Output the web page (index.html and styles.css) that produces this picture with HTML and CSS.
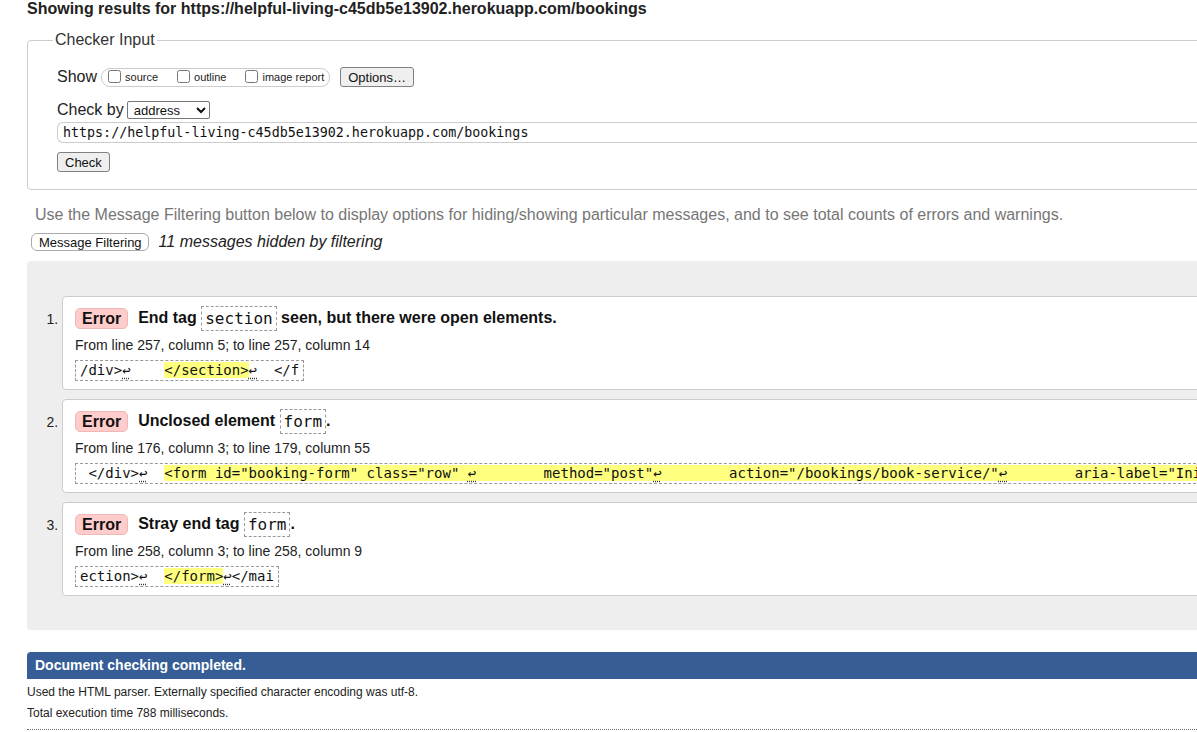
FILE: index.html
```html
<!DOCTYPE html>
<html lang="en">
<head>
<meta charset="utf-8">
<title>Nu Html Checker</title>
<link rel="stylesheet" href="styles.css">
</head>
<body>
<div class="page">
  <h2 class="title">Showing results for https://helpful-living-c45db5e13902.herokuapp.com/bookings</h2>

  <fieldset class="checker">
    <legend class="legend">Checker Input</legend>
    <div class="row-show">
      <span class="lbl">Show</span>
      <span class="opts">
        <label class="opt"><input type="checkbox" class="cb">source</label>
        <label class="opt"><input type="checkbox" class="cb">outline</label>
        <label class="opt last"><input type="checkbox" class="cb">image report</label>
      </span>
      <button class="btn btn-options" type="button">Options…</button>
    </div>
    <div class="row-by">
      <span class="lbl">Check by</span>
      <select class="sel"><option>address</option></select>
    </div>
    <input class="url" type="text" value="https://helpful-living-c45db5e13902.herokuapp.com/bookings">
    <div class="row-check"><button class="btn btn-check" type="button">Check</button></div>
  </fieldset>

  <p class="instructions">Use the Message Filtering button below to display options for hiding/showing particular messages, and to see total counts of errors and warnings.</p>
  <div class="filter-row">
    <button class="btn-filter" type="button">Message Filtering</button>
    <span class="hidden-count">11 messages hidden by filtering</span>
  </div>

  <div class="results">
    <ol class="msgs">
      <li class="msg">
        <p class="msg-head"><span class="badge">Error</span><span class="msg-text">End tag <code class="tag">section</code> seen, but there were open elements.</span></p>
        <p class="loc">From line 257, column 5; to line 257, column 14</p>
        <p class="extract-wrap"><code class="extract">/div&gt;<span class="lf">↩</span>    <mark class="hl">&lt;/section&gt;</mark><span class="lf">↩</span>  &lt;/f</code></p>
      </li>
      <li class="msg">
        <p class="msg-head"><span class="badge">Error</span><span class="msg-text">Unclosed element <code class="tag">form</code>.</span></p>
        <p class="loc">From line 176, column 3; to line 179, column 55</p>
        <p class="extract-wrap"><code class="extract"> &lt;/div&gt;<span class="lf">↩</span>  <mark class="hl">&lt;form id="booking-form" class="row" <span class="lf">↩</span>        method="post"<span class="lf">↩</span>        action="/bookings/book-service/"<span class="lf">↩</span>        aria-label="Ini</mark></code></p>
      </li>
      <li class="msg">
        <p class="msg-head"><span class="badge">Error</span><span class="msg-text">Stray end tag <code class="tag">form</code>.</span></p>
        <p class="loc">From line 258, column 3; to line 258, column 9</p>
        <p class="extract-wrap"><code class="extract">ection&gt;<span class="lf">↩</span>  <mark class="hl">&lt;/form&gt;</mark><span class="lf">↩</span>&lt;/mai</code></p>
      </li>
    </ol>
  </div>

  <p class="done">Document checking completed.</p>
  <p class="stats">Used the HTML parser. Externally specified character encoding was utf-8.</p>
  <p class="stats">Total execution time 788 milliseconds.</p>
  <hr class="dots">
</div>
</body>
</html>
```

FILE: styles.css
```css
html, body {
  margin: 0;
  padding: 0;
  overflow: hidden;
  background: #fff;
}

body {
  font-family: "Liberation Sans", Arial, sans-serif;
  color: #222;
}

.page {
  width: 1600px;
  padding-left: 27px;
}

.title {
  margin: 0;
  font-size: 16px;
  line-height: 18px;
  font-weight: bold;
  color: #222;
}

.checker {
  margin: 13px 0 0;
  padding: 18px 0 17px 29px;
  border: 1px solid #ccc;
  border-radius: 4px;
  min-inline-size: 0;
}

.legend {
  font-size: 16px;
  line-height: 18px;
  padding: 0 2px;
  margin-left: -4px;
  color: #333;
}

.row-show {
  display: flex;
  align-items: center;
  height: 20px;
}

.lbl {
  font-size: 16px;
  line-height: 20px;
  color: #222;
}

.opts {
  display: inline-flex;
  align-items: center;
  box-sizing: border-box;
  height: 19px;
  margin-left: 4px;
  padding: 0 5px 0 6px;
  border: 1px solid #ccc;
  border-radius: 9px;
}

.opt {
  display: inline-flex;
  align-items: center;
  font-size: 11px;
  color: #222;
  margin-right: 19px;
}

.opt.last {
  margin-right: 0;
}

.cb {
  width: 13px;
  height: 13px;
  margin: 0 4px 2px 0;
}

.btn {
  font-family: "Liberation Sans", Arial, sans-serif;
  font-size: 13px;
  color: #111;
  background: #efefef;
  border: 1px solid #808080;
  border-radius: 3px;
  box-sizing: border-box;
  height: 20px;
  padding: 0 7px;
}

.btn-options {
  margin-left: 10px;
}

.row-by {
  display: flex;
  align-items: center;
  height: 18px;
  margin-top: 14px;
}

.sel {
  margin-left: 3px;
  width: 83px;
  height: 18px;
  font-family: "Liberation Sans", Arial, sans-serif;
  font-size: 13px;
  padding: 0 0 0 2px;
  border: 1px solid #767676;
  border-radius: 2px;
  background: #fff;
  color: #111;
}

.url {
  display: block;
  box-sizing: border-box;
  margin-top: 3px;
  width: 100%;
  height: 21px;
  padding: 0 5px;
  font-family: "DejaVu Sans Mono", monospace;
  font-size: 13.333px;
  color: #111;
  border: 1px solid #ccc;
  border-right: none;
  border-radius: 6px 0 0 6px;
  outline: none;
}

.row-check {
  margin-top: 9px;
  height: 20px;
}

.instructions {
  margin: 16px 0 0 8px;
  font-size: 16px;
  line-height: 18px;
  color: #767676;
}

.filter-row {
  display: flex;
  align-items: center;
  margin-top: 9px;
  height: 18px;
}

.btn-filter {
  margin-left: 4px;
  box-sizing: border-box;
  height: 18px;
  padding: 0 6px 0 7px;
  font-family: "Liberation Sans", Arial, sans-serif;
  font-size: 13px;
  color: #111;
  background: #fff;
  border: 1px solid #aaa;
  border-radius: 6px;
}

.hidden-count {
  margin-left: 10px;
  font-size: 16px;
  font-style: italic;
  color: #222;
}

.results {
  margin-top: 10px;
  background: #eee;
  border-radius: 4px;
  padding: 35px 0 34px 35px;
}

.msgs {
  margin: 0;
  padding: 0;
  font-size: 14px;
  color: #222;
}

.msg {
  background: #fff;
  border: 1px solid #ccc;
  border-radius: 4px;
  padding: 8px 12px;
  margin-bottom: 9px;
}

.msg:last-child {
  margin-bottom: 0;
}

.msg-head {
  margin: 0;
  height: 26px;
  display: flex;
  align-items: center;
  white-space: nowrap;
}

.badge {
  display: inline-block;
  box-sizing: border-box;
  height: 21px;
  line-height: 19px;
  padding: 0 6px;
  margin-right: 10px;
  font-size: 16px;
  font-weight: bold;
  color: #111;
  background: #fcc;
  border: 1px solid #f0b8b8;
  border-radius: 5px;
}

.msg-text {
  font-size: 16px;
  font-weight: bold;
  color: #111;
}

.tag {
  display: inline-block;
  box-sizing: border-box;
  height: 25px;
  line-height: 23px;
  padding: 0 3px;
  font-family: "DejaVu Sans Mono", monospace;
  font-size: 16px;
  font-weight: normal;
  color: #111;
  border: 1px dashed #999;
  vertical-align: middle;
}

.loc {
  margin: 6px 0 0;
  font-size: 14px;
  line-height: 16px;
  color: #222;
}

.extract-wrap {
  margin: 7px 0 0;
  white-space: nowrap;
}

.extract {
  display: inline-block;
  box-sizing: border-box;
  height: 21px;
  line-height: 19px;
  padding: 0 4px;
  font-family: "DejaVu Sans Mono", monospace;
  font-size: 14px;
  color: #111;
  white-space: pre;
  border: 1px dashed #999;
}

.hl {
  background: #ffff80;
  color: #111;
}

.lf {
  text-decoration: underline dotted #333;
  text-underline-offset: 3px;
}

.done {
  margin: 22px 0 0;
  height: 27px;
  line-height: 27px;
  padding-left: 8px;
  font-size: 14px;
  font-weight: bold;
  color: #fff;
  background: #365d95;
  border-radius: 4px 0 0 0;
}

.stats {
  margin: 6px 0 0;
  font-size: 12px;
  line-height: 15px;
  color: #222;
}

.dots {
  margin: 8px 0 0;
  border: none;
  border-top: 1px dotted #666;
  height: 0;
}
```
